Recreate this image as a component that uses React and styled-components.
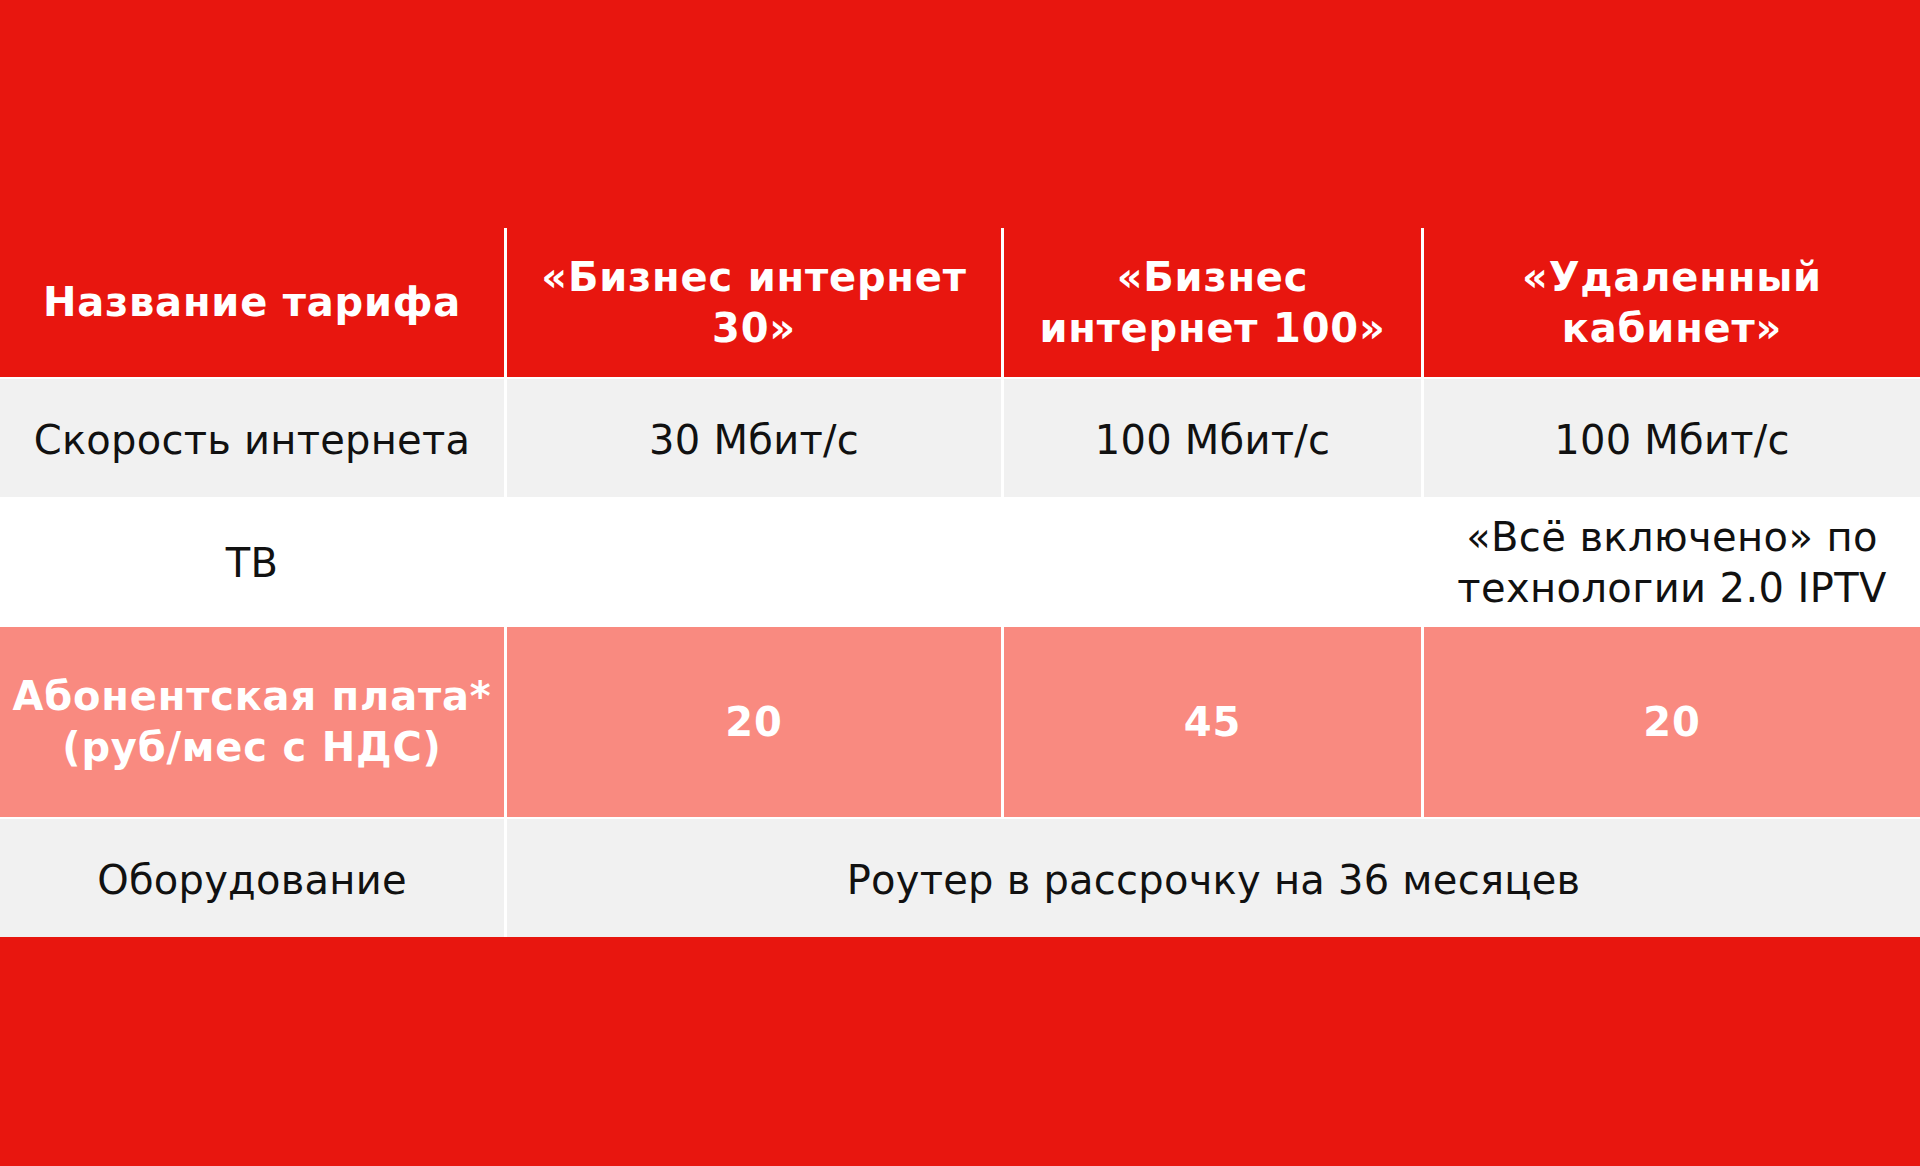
import React from "react";
import styled, { createGlobalStyle, css } from "styled-components";

const GlobalStyle = createGlobalStyle`
  html, body {
    margin: 0;
    padding: 0;
    background: #e8160f;
  }
  body {
    font-family: "DejaVu Sans", Verdana, sans-serif;
  }
`;

const Page = styled.div`
  width: 1920px;
  height: 1166px;
  background: #e8160f;
  padding-top: 228px;
  box-sizing: border-box;
  overflow: hidden;
`;

const Table = styled.div`
  display: grid;
  grid-template-columns: 504px 494px 417px 1fr;
  grid-template-rows: 149px 118px 126px 190px 118px;
  column-gap: 3px;
  row-gap: 2px;
  background: #ffffff;
`;

const variants = {
  head: css`
    background: #e8160f;
    color: #ffffff;
    font-weight: bold;
    letter-spacing: 0.8px;
  `,
  gray: css`
    background: #f1f1f1;
    color: #111111;
    letter-spacing: 0.25px;
    padding-top: 4px;
  `,
  white: css`
    background: #ffffff;
    color: #111111;
    letter-spacing: 0.4px;
    padding-top: 2px;
  `,
  pink: css`
    background: #f98a80;
    color: #ffffff;
    font-weight: bold;
    letter-spacing: 0.8px;
  `,
};

const Cell = styled.div`
  display: flex;
  align-items: center;
  justify-content: center;
  text-align: center;
  font-size: 40px;
  line-height: 51px;
  box-sizing: border-box;
  ${({ $variant }) => variants[$variant]}
  ${({ $span }) => $span && `grid-column: span ${$span};`}
`;

const rows = [
  {
    variant: "head",
    cells: [
      "Название тарифа",
      <>«Бизнес интернет<br />30»</>,
      <>«Бизнес<br />интернет 100»</>,
      <>«Удаленный<br />кабинет»</>,
    ],
  },
  {
    variant: "gray",
    cells: ["Скорость интернета", "30 Мбит/с", "100 Мбит/с", "100 Мбит/с"],
  },
  {
    variant: "white",
    cells: ["ТВ", "", "", <>«Всё включено» по<br />технологии 2.0 IPTV</>],
  },
  {
    variant: "pink",
    cells: [<>Абонентская плата*<br />(руб/мес с НДС)</>, "20", "45", "20"],
  },
];

export default function App() {
  return (
    <Page>
      <GlobalStyle />
      <Table>
        {rows.map((row, i) =>
          row.cells.map((c, j) => (
            <Cell key={`${i}-${j}`} $variant={row.variant}>
              {c}
            </Cell>
          ))
        )}
        <Cell $variant="gray">Оборудование</Cell>
        <Cell $variant="gray" $span={3}>
          Роутер в рассрочку на 36 месяцев
        </Cell>
      </Table>
    </Page>
  );
}
